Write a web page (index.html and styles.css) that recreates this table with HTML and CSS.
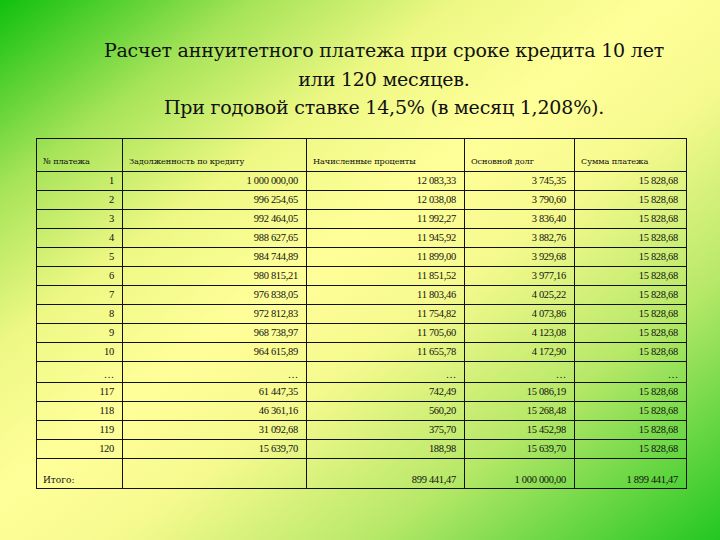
FILE: index.html
```html
<!DOCTYPE html>
<html>
<head>
<meta charset="utf-8">
<title>Расчет аннуитетного платежа</title>
<link rel="stylesheet" href="styles.css">
</head>
<body>
<div class="slide">
  <div class="title">
    <p class="line">Расчет аннуитетного платежа при сроке кредита 10 лет</p>
    <p class="line">или 120 месяцев.</p>
    <p class="line">При годовой ставке 14,5% (в месяц 1,208%).</p>
  </div>
  <table class="grid">
    <colgroup>
      <col class="c1"><col class="c2"><col class="c3"><col class="c4"><col class="c5">
    </colgroup>
    <tr class="head">
      <td>№ платежа</td><td>Задолженность по кредиту</td><td>Начисленные проценты</td><td>Основной долг</td><td>Сумма платежа</td>
    </tr>
    <tr><td>1</td><td>1 000 000,00</td><td>12 083,33</td><td>3 745,35</td><td>15 828,68</td></tr>
    <tr><td>2</td><td>996 254,65</td><td>12 038,08</td><td>3 790,60</td><td>15 828,68</td></tr>
    <tr><td>3</td><td>992 464,05</td><td>11 992,27</td><td>3 836,40</td><td>15 828,68</td></tr>
    <tr><td>4</td><td>988 627,65</td><td>11 945,92</td><td>3 882,76</td><td>15 828,68</td></tr>
    <tr><td>5</td><td>984 744,89</td><td>11 899,00</td><td>3 929,68</td><td>15 828,68</td></tr>
    <tr><td>6</td><td>980 815,21</td><td>11 851,52</td><td>3 977,16</td><td>15 828,68</td></tr>
    <tr><td>7</td><td>976 838,05</td><td>11 803,46</td><td>4 025,22</td><td>15 828,68</td></tr>
    <tr><td>8</td><td>972 812,83</td><td>11 754,82</td><td>4 073,86</td><td>15 828,68</td></tr>
    <tr><td>9</td><td>968 738,97</td><td>11 705,60</td><td>4 123,08</td><td>15 828,68</td></tr>
    <tr><td>10</td><td>964 615,89</td><td>11 655,78</td><td>4 172,90</td><td>15 828,68</td></tr>
    <tr class="dots"><td>…</td><td>…</td><td>…</td><td>…</td><td>…</td></tr>
    <tr><td>117</td><td>61 447,35</td><td>742,49</td><td>15 086,19</td><td>15 828,68</td></tr>
    <tr><td>118</td><td>46 361,16</td><td>560,20</td><td>15 268,48</td><td>15 828,68</td></tr>
    <tr><td>119</td><td>31 092,68</td><td>375,70</td><td>15 452,98</td><td>15 828,68</td></tr>
    <tr><td>120</td><td>15 639,70</td><td>188,98</td><td>15 639,70</td><td>15 828,68</td></tr>
    <tr class="total"><td class="label">Итого:</td><td></td><td>899 441,47</td><td>1 000 000,00</td><td>1 899 441,47</td></tr>
  </table>
</div>
</body>
</html>
```
FILE: styles.css
```css
html, body {
  margin: 0;
  padding: 0;
}
body {
  width: 720px;
  height: 540px;
  overflow: hidden;
  background: linear-gradient(to bottom right, #0fc00f 0%, #a8e45a 18%, #eef884 32%, #ffff99 46%, #f6fa8e 58%, #b6e868 76%, #22c722 100%);
  font-family: "Liberation Serif", "DejaVu Serif", serif;
  color: #111;
}
.slide {
  padding: 36px 0 0 36px;
}
.title {
  margin: 0 0 16px 12px;
  width: 672px;
  text-align: center;
  font-family: "DejaVu Serif", serif;
  font-size: 19px;
  line-height: 28.5px;
  letter-spacing: -0.2px;
  color: #111;
}
.line {
  margin: 0;
}
.grid {
  border-collapse: collapse;
  table-layout: fixed;
  width: 650px;
  font-family: "Liberation Serif", "DejaVu Serif", serif;
  font-size: 10.5px;
  letter-spacing: -0.3px;
}
.c1 { width: 86px; }
.c2 { width: 184px; }
.c3 { width: 158px; }
.c4 { width: 110px; }
.c5 { width: 112px; }
.grid td {
  border: 1.5px solid #111;
  height: 18px;
  padding: 0 8px 0 6px;
  text-align: right;
  vertical-align: middle;
  white-space: nowrap;
}
.grid .head td {
  height: 27px;
  text-align: left;
  vertical-align: bottom;
  padding-bottom: 5px;
  font-family: "DejaVu Serif", serif;
  font-size: 8.2px;
  letter-spacing: -0.1px;
}
.grid .dots td {
  vertical-align: bottom;
  padding-bottom: 2px;
}
.grid .total td {
  height: 26px;
  vertical-align: bottom;
  padding-bottom: 3px;
}
.grid .total .label {
  text-align: left;
  font-family: "DejaVu Serif", serif;
  font-size: 9px;
  letter-spacing: 0;
}
```
